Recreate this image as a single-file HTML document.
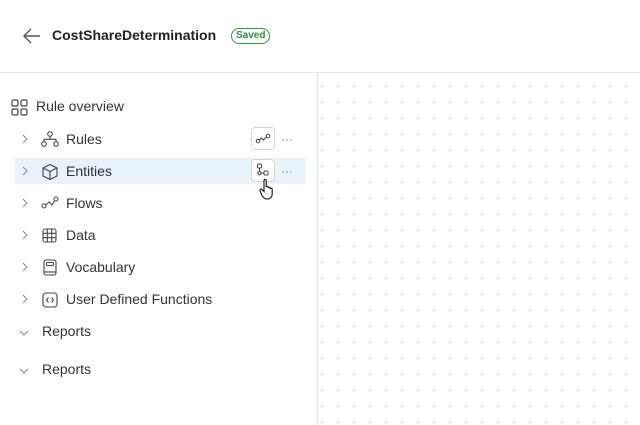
<!DOCTYPE html>
<html><head><meta charset="utf-8"><style>
*{box-sizing:border-box;margin:0;padding:0}
body{width:640px;height:425px;overflow:hidden;background:#fff;font-family:"Liberation Sans",sans-serif;color:#333;position:relative}
.hdr{position:absolute;left:0;top:0;width:640px;height:73px;border-bottom:1px solid #e3e3e3}
.title{position:absolute;left:52px;top:27px;font-size:14px;font-weight:bold;color:#222}
.badge{position:absolute;left:231px;top:28px;height:16px;padding:0 4px;border:1.5px solid #2e9a3c;border-radius:9px;color:#2e8a37;font-size:10px;font-weight:bold;line-height:13px}
.canvas{position:absolute;left:319px;top:73px;right:0;bottom:0;background-image:radial-gradient(circle,#b0b0b0 0.6px,transparent 0.9px);background-size:16px 16px;background-position:-5px 5px}
.vline{position:absolute;left:316px;top:73px;width:3px;bottom:0;background:#f0f0f0}
.row{position:absolute;left:15px;width:290px;height:26px;font-size:14px;line-height:26px}
.row .lbl{position:absolute;left:51px}
.chev{position:absolute;left:6px;top:8px}
.ic{position:absolute;left:26px;top:5px}
.hl{background:#e9f1fb}
.btn{position:absolute;left:236px;top:1px;width:24px;height:23px;border:1px solid #d5d5d5;border-radius:4px;background:#fff}
.dots{position:absolute;left:266px;top:0;color:#777;font-size:12px;letter-spacing:0px}
</style></head><body>
<div class="hdr">
<svg style="position:absolute;left:22px;top:27px" width="20" height="18" viewBox="0 0 20 18"><path d="M18 9H3M9 2L2 9l7 7" stroke="#555" stroke-width="1.4" fill="none"/></svg>
<div class="title">CostShareDetermination</div>
<div class="badge">Saved</div>
</div>
<div class="vline"></div>
<div class="canvas"></div>

<svg style="position:absolute;left:11px;top:99px" width="18" height="18" viewBox="0 0 18 18" fill="none" stroke="#444" stroke-width="1.2"><rect x="1" y="1" width="6" height="6" rx="1.5"/><rect x="10" y="1" width="6" height="6" rx="1.5"/><rect x="1" y="10" width="6" height="6" rx="1.5"/><rect x="10" y="10" width="6" height="6" rx="1.5"/></svg>
<div style="position:absolute;left:36px;top:98px;font-size:14px">Rule overview</div>

<div class="row" style="top:126px"><svg class="chev" width="8" height="10"><path d="M2 1l4 4-4 4" stroke="#888" fill="none"/></svg>
<svg class="ic" width="18" height="16" viewBox="0 0 18 16" fill="none" stroke="#444" stroke-width="1.1"><circle cx="9" cy="3" r="2.3"/><circle cx="3" cy="13" r="2.3"/><circle cx="15" cy="13" r="2.3"/><path d="M9 5.3v3M3 10.7V8.3h12v2.4"/></svg>
<span class="lbl">Rules</span>
<div class="btn"><svg width="22" height="21" viewBox="0 0 22 21" fill="none" stroke="#444" stroke-width="1"><circle cx="6" cy="13" r="1.8"/><circle cx="16" cy="8" r="1.8"/><path d="M7.5 12l2-2 2 2 2.8-3"/></svg></div>
<span class="dots">···</span></div>

<div class="row hl" style="top:158px"><svg class="chev" width="8" height="10"><path d="M2 1l4 4-4 4" stroke="#888" fill="none"/></svg>
<svg class="ic" width="18" height="18" viewBox="0 0 18 18" fill="none" stroke="#444" stroke-width="1.1"><path d="M9 1.5l7 3.5v8l-7 3.5-7-3.5V5z"/><path d="M2 5l7 3.5L16 5M9 8.5V16"/></svg>
<span class="lbl">Entities</span>
<div class="btn"><svg width="22" height="21" viewBox="0 0 22 21" fill="none" stroke="#444" stroke-width="1"><rect x="5.5" y="4" width="4" height="4" rx="1"/><path d="M7.5 8v3"/><path d="M7.5 11l2 2-2 2-2-2z"/><rect x="12" y="11" width="4" height="4" rx="1"/><path d="M9.5 13H12"/></svg></div>
<span class="dots">···</span>
<svg style="position:absolute;left:244px;top:20px" width="16" height="22" viewBox="0 0 16 22"><path d="M5 2.5c0-1.5 2.2-1.5 2.2 0V9c0-1 2-1 2 0v1c0-1 2-1 2 0v1c0-1 2-1 2 .5V16c0 3-2 5-5 5s-4-1.5-5.5-4L1.2 13c-.8-1.5 1-2.5 2-1.3L5 13.5z" fill="#fff" stroke="#111" stroke-width="1.1"/></svg>
</div>

<div class="row" style="top:190px"><svg class="chev" width="8" height="10"><path d="M2 1l4 4-4 4" stroke="#888" fill="none"/></svg>
<svg class="ic" width="18" height="16" viewBox="0 0 18 16" fill="none" stroke="#444" stroke-width="1.1"><circle cx="3" cy="11" r="2"/><circle cx="15" cy="4" r="2"/><path d="M5 10l3-3 3 3 2.5-4"/></svg>
<span class="lbl">Flows</span></div>

<div class="row" style="top:222px"><svg class="chev" width="8" height="10"><path d="M2 1l4 4-4 4" stroke="#888" fill="none"/></svg>
<svg class="ic" width="18" height="18" viewBox="0 0 18 18" fill="none" stroke="#444" stroke-width="1.1"><rect x="2" y="2" width="13" height="13" rx="2"/><path d="M6.3 2v13M10.7 2v13M2 6.3h13M2 10.7h13"/></svg>
<span class="lbl">Data</span></div>

<div class="row" style="top:254px"><svg class="chev" width="8" height="10"><path d="M2 1l4 4-4 4" stroke="#888" fill="none"/></svg>
<svg class="ic" width="18" height="18" viewBox="0 0 18 18" fill="none" stroke="#444" stroke-width="1.1"><rect x="3" y="1" width="12" height="15" rx="2"/><rect x="5.5" y="3.5" width="7" height="3" rx="1"/><path d="M3 13h12"/></svg>
<span class="lbl">Vocabulary</span></div>

<div class="row" style="top:286px"><svg class="chev" width="8" height="10"><path d="M2 1l4 4-4 4" stroke="#888" fill="none"/></svg>
<svg class="ic" width="18" height="18" viewBox="0 0 18 18" fill="none" stroke="#444" stroke-width="1.1"><rect x="2" y="2" width="14" height="14" rx="3"/><path d="M7.5 6.5L5.5 9l2 2.5M10.5 6.5l2 2.5-2 2.5"/></svg>
<span class="lbl">User Defined Functions</span></div>

<div class="row" style="top:318px"><svg style="position:absolute;left:4px;top:11px" width="10" height="8"><path d="M1 2l4 4 4-4" stroke="#888" fill="none"/></svg><span style="position:absolute;left:27px">Reports</span></div>
<div class="row" style="top:356px"><svg style="position:absolute;left:4px;top:11px" width="10" height="8"><path d="M1 2l4 4 4-4" stroke="#888" fill="none"/></svg><span style="position:absolute;left:27px">Reports</span></div>
</body></html>
